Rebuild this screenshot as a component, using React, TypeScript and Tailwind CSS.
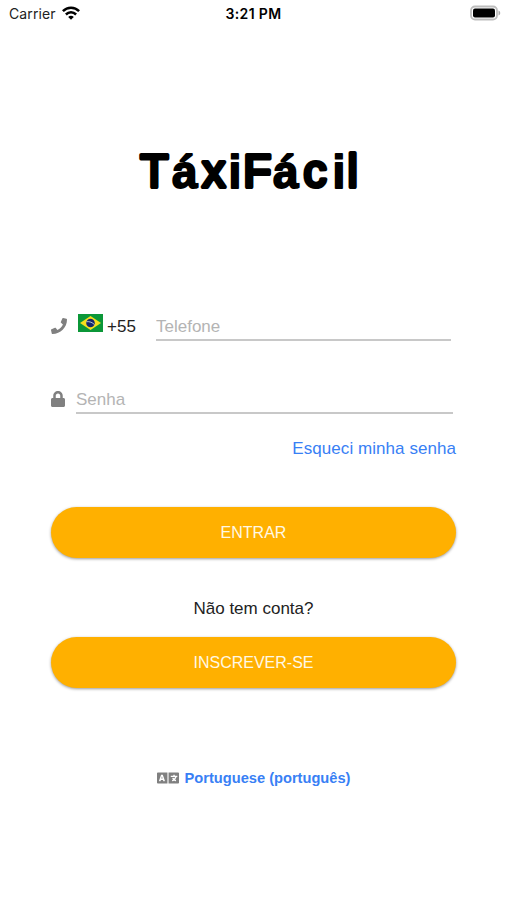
import React from 'react';
import { FaLanguage, FaLock, FaPhone } from 'react-icons/fa';

const StatusBar: React.FC = () => (
  <header className="grid h-7 grid-cols-3 items-center pl-[9px] pr-[6px] font-['Inter'] text-[14px] text-[#222]">
    <div className="flex items-center gap-[6px]">
      <span className="-mt-[2px] tracking-[0.1px]">Carrier</span>
      <svg className="-mt-[2px]" width="18" height="14" viewBox="0 0 18 14" fill="none" stroke="#000" strokeWidth="2.5">
        <path d="M0.9 5.2C5.4 0.6 12.6 0.6 17.1 5.2" />
        <path d="M3.9 8.5C6.8 5.6 11.2 5.6 14.1 8.5" />
        <path d="M9 13.8 6.2 11C7.8 9.4 10.2 9.4 11.8 11Z" fill="#000" stroke="none" />
      </svg>
    </div>
    <span className="-mt-px pr-[3px] text-center text-[14px] font-semibold tracking-[0.35px] text-black">3:21 PM</span>
    <svg className="-mt-[2px] justify-self-end" width="31" height="16" viewBox="0 0 31 16">
      <rect x="1" y="1.5" width="26" height="13" rx="4" fill="#fff" stroke="#bdbdbd" strokeWidth="1.8" />
      <rect x="3" y="3.5" width="22" height="9" rx="2" fill="#000" />
      <path d="M28.5 5.5C30.8 6.5 30.8 9.5 28.5 10.5Z" fill="#aaa" />
    </svg>
  </header>
);

// Letters with a dot or an accent take the bold cut and a thinner stroke, so the gap stays open
const letters = [
  { char: 'T', x: 6.2 },
  { char: 'á', x: 38, bold: true },
  { char: 'x', x: 68.2 },
  { char: 'i', x: 94.4, bold: true },
  { char: 'F', x: 109.2 },
  { char: 'á', x: 139, bold: true },
  { char: 'c', x: 169.5 },
  { char: 'i', x: 198.4, bold: true },
  { char: 'l', x: 213.6 },
];

const Logo: React.FC = () => (
  <svg className="mx-auto mt-[112px] block" width="240" height="60" viewBox="0 0 240 60">
    <text
      fontFamily="Liberation Sans"
      fontSize="46"
      fill="#000"
      stroke="#000"
      strokeLinejoin="round"
      strokeLinecap="round"
    >
      {letters.map((l, i) => (
        <tspan key={i} x={l.x} y={l.bold ? 47.8 : 47} fontWeight={l.bold ? 700 : 400} strokeWidth={l.bold ? 1.8 : 4.1}>
          {l.char}
        </tspan>
      ))}
    </text>
  </svg>
);

const BrazilFlag: React.FC = () => (
  <svg width="25" height="18" viewBox="0 0 25 18">
    <rect width="25" height="18" fill="#0b9738" />
    <path d="M12.5 2 23 9 12.5 16 2 9Z" fill="#f7df1e" />
    <circle cx="12.5" cy="9" r="4.3" fill="#17276d" />
    <path d="M8.5 7.7C11.5 7.3 14.5 8.4 16.5 10.7" fill="none" stroke="#dce8ed" strokeWidth="0.8" />
  </svg>
);

const RoundButton: React.FC<{ label: string }> = ({ label }) => (
  <button className="h-[51px] w-full rounded-full bg-[#ffb000] text-[16px] text-[#fff8e5] shadow-[0_1px_3px_rgba(0,0,0,0.4)]">
    {label}
  </button>
);

const App: React.FC = () => {
  return (
    <div className="h-[900px] w-[507px] overflow-hidden bg-white font-['Liberation_Sans',sans-serif] text-[#222]">
      <StatusBar />
      <Logo />

      <main className="ml-[51px] mt-[107px] w-[405px]">
        {/* Phone */}
        <div className="flex h-[34px] items-start">
          <FaPhone className="mt-[11px] text-[16px] text-[#808080]" />
          <div className="ml-[11px] mt-[7px]"><BrazilFlag /></div>
          <span className="ml-1 mt-[8px] w-[49px] text-[17px] leading-6">+55</span>
          <input
            className="h-[34px] w-[295px] border-b-2 border-[#c8c8c8] pt-[7px] text-[17px] outline-none placeholder:text-[#b4b4b4]"
            placeholder="Telefone"
          />
        </div>

        {/* Password */}
        <div className="mt-[39px] flex h-[34px] items-start">
          <FaLock className="ml-[-1px] mt-[11px] text-[16px] text-[#808080]" />
          <input
            type="password"
            className="ml-[10px] h-[34px] w-[377px] border-b-2 border-[#c8c8c8] pt-[7px] text-[17px] outline-none placeholder:text-[#b4b4b4]"
            placeholder="Senha"
          />
        </div>
        <a className="mt-[23px] block text-right text-[17px] leading-6 tracking-[0.06px] text-[#3880f5]">
          Esqueci minha senha
        </a>

        <div className="mt-[46px]"><RoundButton label="ENTRAR" /></div>
        <p className="mb-[16px] mt-[39px] text-center text-[17px] leading-6">Não tem conta?</p>
        <RoundButton label="INSCREVER-SE" />
      </main>

      {/* Language */}
      <div className="mt-[79px] flex items-center justify-center gap-[6px] text-[14.65px] font-bold leading-[22px] text-[#3880f5]">
        <FaLanguage className="text-[22px] text-[#808080]" />
        <span>Portuguese (português)</span>
      </div>
    </div>
  );
};

export default App;
